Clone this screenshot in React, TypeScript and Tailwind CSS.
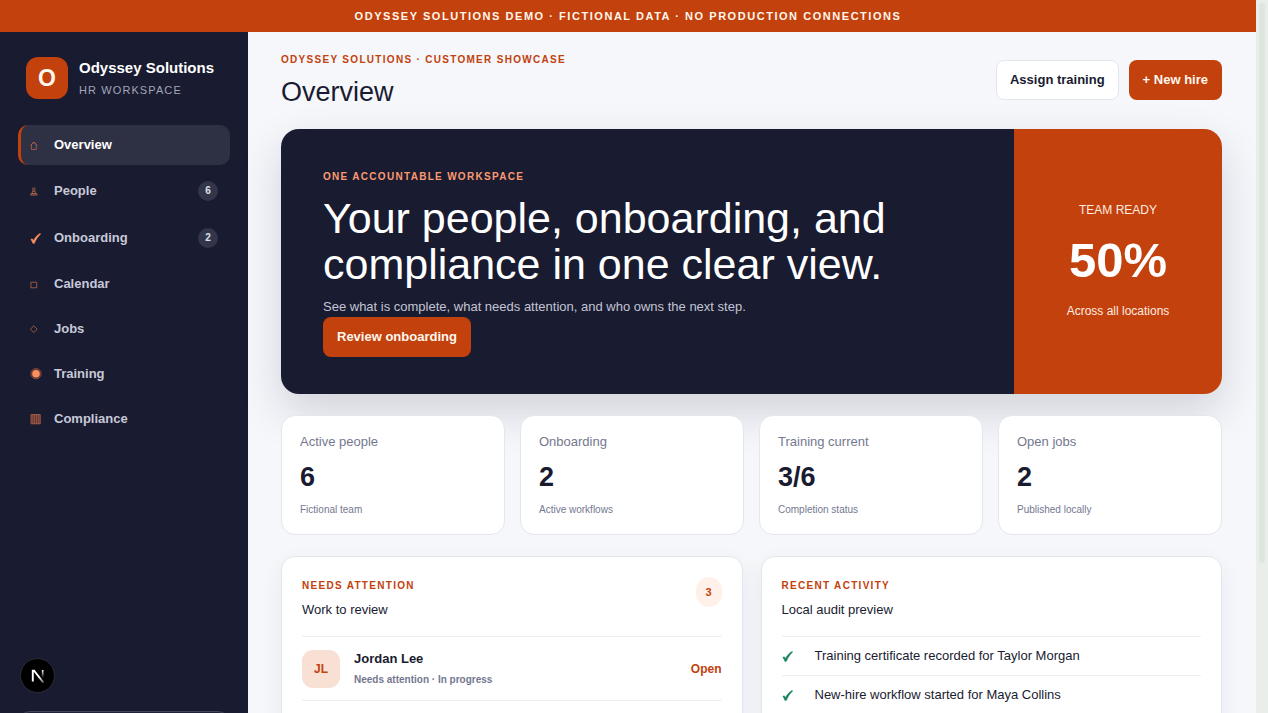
import type { ReactNode } from "react";

type NavItem = { label: string; icon: ReactNode; count?: number; active?: boolean };

const CHECK_PATH = "M0.8 5.8 C1.8 5 2.6 5.4 3.2 6.8 C4.8 3.8 6.8 1.6 9.2 0.4 L9.7 0.9 C7.4 3 5.4 6 4 9.3 L2.7 9.5 C2.2 8 1.6 6.7 0.8 5.8 Z";

function Check({ className }: { className: string }) {
  return (
    <svg viewBox="0 0 10 10" className={className} aria-hidden="true">
      <path d={CHECK_PATH} fill="currentColor" stroke="currentColor" strokeWidth="0.5" strokeLinejoin="round" />
    </svg>
  );
}

function Glyph({ children }: { children: ReactNode }) {
  return (
    <svg viewBox="0 0 12 12" className="size-3" fill="none" stroke="#b8684a" strokeWidth="0.8" aria-hidden="true">
      {children}
    </svg>
  );
}

const navItems: NavItem[] = [
  {
    label: "Overview",
    active: true,
    icon: (
      <Glyph>
        <path d="M1.4 10.4V5.6L3.8 3l2.4 2.6v4.8zM0.6 6.4 3.8 3l3.2 3.4" />
      </Glyph>
    ),
  },
  {
    label: "People",
    count: 6,
    icon: (
      <Glyph>
        <circle cx="3.8" cy="4.2" r="1.3" />
        <path d="M2 6.2h3.6M3 6.2 1.7 8.6h4.2L4.6 6.2M0.6 10.1h6.4V8.8H0.6z" />
      </Glyph>
    ),
  },
  { label: "Onboarding", count: 2, icon: <Check className="size-[11px] text-[#fb8f5f]" /> },
  {
    label: "Calendar",
    icon: (
      <Glyph>
        <path d="M0.9 4.2h5.8v5.6H0.9z" />
      </Glyph>
    ),
  },
  {
    label: "Jobs",
    icon: (
      <Glyph>
        <path d="M3.8 2.9 7.2 6.2 3.8 9.5.4 6.2z" />
      </Glyph>
    ),
  },
  {
    label: "Training",
    icon: (
      <Glyph>
        <circle cx="6" cy="5.7" r="5.2" fill="#5f3435" stroke="#8a4a38" />
        <circle cx="6" cy="5.7" r="3.8" fill="#fb8f5f" stroke="none" />
      </Glyph>
    ),
  },
  {
    label: "Compliance",
    icon: (
      <Glyph>
        <path d="M1 1.6h9.2v9.2H1z" fill="#5f3435" />
        <path d="M2.8 1.6v9.2M4.6 1.6v9.2M6.6 1.6v9.2M8.4 1.6v9.2" strokeWidth="0.6" />
      </Glyph>
    ),
  },
];

const stats = [
  { label: "Active people", value: "6", note: "Fictional team" },
  { label: "Onboarding", value: "2", note: "Active workflows" },
  { label: "Training current", value: "3/6", note: "Completion status" },
  { label: "Open jobs", value: "2", note: "Published locally" },
];

const activity = ["Training certificate recorded for Taylor Morgan", "New-hire workflow started for Maya Collins"];

function Sidebar() {
  return (
    <aside className="flex h-screen w-[248px] shrink-0 flex-col bg-[#191b30] px-[18px] pt-[25px] pb-1.5">
      <div className="flex items-center gap-[11px] px-2">
        <div className="flex size-[42px] items-center justify-center rounded-xl bg-[#c2410c] text-[23px] font-bold text-[#fff7ed]">
          O
        </div>
        <div>
          <div className="text-[15px] leading-5 font-bold text-white">Odyssey Solutions</div>
          <div className="mt-1 text-[11px] leading-4 tracking-[0.1em] text-[#a3a5b8]">HR WORKSPACE</div>
        </div>
      </div>
      <nav className="mt-[26px] flex flex-col gap-[5px]">
        {navItems.map((item) => (
          <a
            key={item.label}
            href="#"
            className={
              item.active
                ? "flex items-center rounded-[10px] border-l-[3px] border-[#c2410c] bg-[#2e3043] py-[11px] pr-3 pl-[9px] text-[13px] leading-[18px] font-bold text-white"
                : "flex items-center rounded-[10px] py-[11px] pr-3 pl-3 text-[13px] leading-[18px] font-bold text-[#c7c9d9]"
            }
          >
            <span className="flex w-6 items-center">{item.icon}</span>
            <span className="flex-1">{item.label}</span>
            {item.count !== undefined && (
              <span className="flex size-5 items-center justify-center rounded-full bg-[#33354a] text-[10px] leading-5 text-[#dfe0ea]">
                {item.count}
              </span>
            )}
          </a>
        ))}
      </nav>
      <div className="mt-auto h-7 rounded-xl border border-[#42445a] bg-[#20223a]" />
    </aside>
  );
}

function Hero() {
  return (
    <section className="mt-[21px] flex overflow-hidden rounded-[18px] shadow-[0_18px_44px_rgba(25,27,48,0.16)]">
      <div className="flex-1 bg-[#191b30] px-[42px] pt-[42px] pb-[37px]">
        <p className="text-[10px] leading-3 font-bold tracking-[0.13em] text-[#fb9a70]">ONE ACCOUNTABLE WORKSPACE</p>
        <h2 className="mt-3 max-w-[620px] text-[43px] leading-[46px] text-white">
          Your people, onboarding, and compliance in one clear view.
        </h2>
        <p className="mt-2.5 text-[13px] leading-5 text-[#c3c5d4]">
          See what is complete, what needs attention, and who owns the next step.
        </p>
        <button type="button" className="h-10 rounded-lg bg-[#c2410c] px-3.5 text-[13px] font-bold text-[#fff7ed]">
          Review onboarding
        </button>
      </div>
      <div className="flex w-[208px] shrink-0 flex-col items-center justify-center bg-[#c2410c] pb-0.5 text-[12px] leading-4 text-[#ffece0]">
        <span>TEAM READY</span>
        <strong className="my-[14px] text-[49px] leading-[57px] font-bold text-white">50%</strong>
        <span>Across all locations</span>
      </div>
    </section>
  );
}

function PanelHeading({ eyebrow, title, count }: { eyebrow: string; title: string; count?: number }) {
  return (
    <div className="flex items-start justify-between pb-4">
      <div className="pt-[3px]">
        <p className="text-[10px] leading-3 font-bold tracking-[0.13em] text-[#c2410c]">{eyebrow}</p>
        <h2 className="mt-2 text-[13px] leading-5">{title}</h2>
      </div>
      {count !== undefined && (
        <span className="flex h-[30px] w-[26px] items-center justify-center rounded-full bg-[#fff0ea] text-[11px] font-bold text-[#c2410c]">
          {count}
        </span>
      )}
    </div>
  );
}

export default function App() {
  return (
    <div className="flex h-screen overflow-hidden bg-[#f5f7fb] font-['Liberation_Sans',Arial,sans-serif] text-[#191b30]">
      <div className="relative min-w-0 flex-1 overflow-y-auto [scrollbar-width:none]">
        <div className="bg-[#c2410c] py-2 text-center text-[11px] leading-4 font-bold tracking-[0.14em] text-[#fff7ed]">
          ODYSSEY SOLUTIONS DEMO · FICTIONAL DATA · NO PRODUCTION CONNECTIONS
        </div>
        <div className="flex">
          <Sidebar />
          <main className="min-w-0 flex-1 pt-5 pr-[34px] pb-8 pl-[33px]">
            <header className="flex items-start justify-between">
              <div>
                <p className="text-[10px] leading-4 font-bold tracking-[0.13em] text-[#c2410c]">
                  ODYSSEY SOLUTIONS · CUSTOMER SHOWCASE
                </p>
                <h1 className="mt-2 text-[27px] leading-8">Overview</h1>
              </div>
              <div className="flex gap-2.5 pt-2">
                <button
                  type="button"
                  className="h-10 rounded-lg border border-[#e4e6ee] bg-white px-[13px] text-[13px] font-bold text-[#191b30]"
                >
                  Assign training
                </button>
                <button type="button" className="h-10 rounded-lg bg-[#c2410c] px-3.5 text-[13px] font-bold text-[#fff7ed]">
                  + New hire
                </button>
              </div>
            </header>

            <Hero />

            <section className="mt-[21px] grid grid-cols-4 gap-[15px]">
              {stats.map((stat) => (
                <article key={stat.label} className="relative rounded-[14px] border border-[#e4e6ee] bg-white px-[18px] py-4">
                  <p className="text-[13px] leading-5 text-[#74788f]">{stat.label}</p>
                  <p className="mt-[9px] text-[27px] leading-8 font-bold">{stat.value}</p>
                  <p className="mt-[9px] text-[10px] leading-4 text-[#74788f]">{stat.note}</p>
                </article>
              ))}
            </section>

            <section className="mt-[21px] grid grid-cols-2 gap-[18px]">
              <article className="rounded-[14px] border border-[#e4e6ee] bg-white px-5 pt-5 pb-14 shadow-[0_8px_24px_rgba(25,27,48,0.06)]">
                <PanelHeading eyebrow="NEEDS ATTENTION" title="Work to review" count={3} />
                <div className="flex items-center gap-3.5 border-y border-[#eceef3] py-3">
                  <div className="flex size-[38px] items-center justify-center rounded-[11px] bg-[#f9e0d5] text-[12px] font-bold text-[#c2410c]">
                    JL
                  </div>
                  <div className="flex-1 font-bold">
                    <p className="text-[13px] leading-5">Jordan Lee</p>
                    <p className="mt-[3px] text-[10px] leading-4 text-[#74788f]">Needs attention · In progress</p>
                  </div>
                  <a href="#" className="text-[12px] font-bold text-[#c2410c]">
                    Open
                  </a>
                </div>
              </article>
              <article className="rounded-[14px] border border-[#e4e6ee] bg-white px-5 pt-5 pb-14 shadow-[0_8px_24px_rgba(25,27,48,0.06)]">
                <PanelHeading eyebrow="RECENT ACTIVITY" title="Local audit preview" />
                <ul>
                  {activity.map((entry) => (
                    <li key={entry} className="flex items-center border-t border-[#eceef3] py-[9px] text-[13px] leading-5">
                      <span className="w-[33px]">
                        <Check className="size-[11px] text-[#16835a]" />
                      </span>
                      {entry}
                    </li>
                  ))}
                </ul>
              </article>
            </section>
          </main>
        </div>
      </div>

      <div className="flex w-3 shrink-0 justify-center bg-[#e9eeea] pt-[3px]" aria-hidden="true">
        <div className="h-[560px] w-1.5 rounded-full bg-[#dfe5df]" />
      </div>

      <button
        type="button"
        aria-label="Developer tools"
        className="fixed bottom-5 left-5 flex size-[35px] items-center justify-center rounded-full border border-[#2c2d3a] bg-black"
      >
        <svg viewBox="0 0 14 14" className="size-3.5" fill="none" aria-hidden="true">
          <defs>
            <linearGradient id="diagonal" x1="8" y1="8" x2="13" y2="14" gradientUnits="userSpaceOnUse">
              <stop stopColor="#fff" />
              <stop offset="1" stopColor="#fff" stopOpacity="0.3" />
            </linearGradient>
            <linearGradient id="stem" x1="11.5" y1="1" x2="11.5" y2="9" gradientUnits="userSpaceOnUse">
              <stop stopColor="#fff" />
              <stop offset="1" stopColor="#fff" stopOpacity="0" />
            </linearGradient>
          </defs>
          <path d="M1.8 12.6V1.6h1.3L12.4 13.6" stroke="url(#diagonal)" strokeWidth="1.9" />
          <path d="M11.7 1v8" stroke="url(#stem)" strokeWidth="1.7" />
        </svg>
      </button>
    </div>
  );
}
